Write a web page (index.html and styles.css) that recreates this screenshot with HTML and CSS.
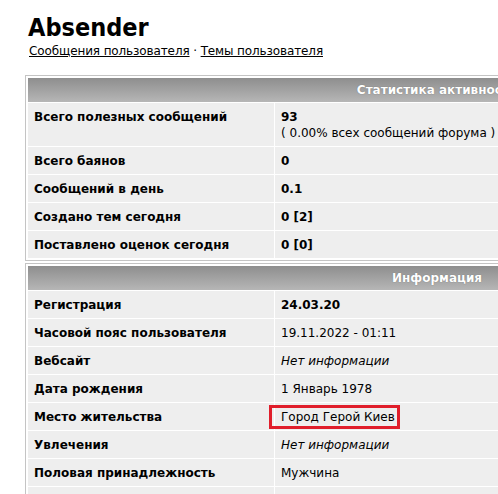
FILE: index.html
```html
<!DOCTYPE html>
<html lang="ru">
<head>
    <meta charset="UTF-8">
    <title>Absender</title>
    <link rel="stylesheet" href="styles.css">
</head>
<body>
    <div class="profile">
        <h1>Absender</h1>
        <div class="user-links">
            <a href="#posts">Сообщения пользователя</a> &middot; <a href="#topics">Темы пользователя</a>
        </div>

        <table class="box">
            <tr>
                <th colspan="2">Статистика активности</th>
            </tr>
            <tr>
                <td class="label">Всего полезных сообщений</td>
                <td class="value"><b>93</b><br>( 0.00% всех сообщений форума )</td>
            </tr>
            <tr>
                <td class="label">Всего баянов</td>
                <td class="value"><b>0</b></td>
            </tr>
            <tr>
                <td class="label">Сообщений в день</td>
                <td class="value"><b>0.1</b></td>
            </tr>
            <tr>
                <td class="label">Создано тем сегодня</td>
                <td class="value"><b>0 [2]</b></td>
            </tr>
            <tr>
                <td class="label">Поставлено оценок сегодня</td>
                <td class="value"><b>0 [0]</b></td>
            </tr>
        </table>

        <table class="box">
            <tr>
                <th colspan="2">Информация</th>
            </tr>
            <tr>
                <td class="label">Регистрация</td>
                <td class="value"><b>24.03.20</b></td>
            </tr>
            <tr>
                <td class="label">Часовой пояс пользователя</td>
                <td class="value">19.11.2022 - 01:11</td>
            </tr>
            <tr>
                <td class="label">Вебсайт</td>
                <td class="value"><i>Нет информации</i></td>
            </tr>
            <tr>
                <td class="label">Дата рождения</td>
                <td class="value">1 Январь 1978</td>
            </tr>
            <tr>
                <td class="label">Место жительства</td>
                <td class="value"><span class="marked">Город Герой Киев</span></td>
            </tr>
            <tr>
                <td class="label">Увлечения</td>
                <td class="value"><i>Нет информации</i></td>
            </tr>
            <tr>
                <td class="label">Половая принадлежность</td>
                <td class="value">Мужчина</td>
            </tr>
            <tr>
                <td class="label">&nbsp;</td>
                <td class="value">&nbsp;</td>
            </tr>
        </table>
    </div>
</body>
</html>
```

FILE: styles.css
```css
html, body {
    overflow: hidden;
}
body {
    font-family: "DejaVu Sans", Verdana, sans-serif;
    font-size: 12px;
    margin: 0;
    padding: 0;
    background-color: #fff;
    color: #000;
}
.profile {
    padding: 12px 0 0 25px;
    width: 830px;
}
h1 {
    font-family: "DejaVu Sans Condensed", "DejaVu Sans", Verdana, sans-serif;
    font-stretch: condensed;
    font-size: 25px;
    font-weight: bold;
    margin: 0 0 0 3px;
    line-height: 32px;
}
.user-links {
    margin: 0 0 0 4px;
    line-height: 15px;
    letter-spacing: -0.12px;
}
.user-links a {
    color: #000;
}
.box {
    width: 824px;
    border: 1px solid #c4c4c4;
    border-spacing: 1px;
    padding: 1px;
    margin-top: 2px;
    background-color: #fff;
}
.user-links + .box {
    margin-top: 16px;
}
.box th {
    height: 24px;
    padding: 0;
    background: linear-gradient(to bottom, #8e8e8e, #b6b6b6);
    color: #fff;
    font-weight: bold;
    font-size: 12px;
    text-align: center;
    text-shadow: 0 0 1px #666;
}
.box td {
    background-color: #eeeeee;
    padding: 6px 6px 5px 6px;
    line-height: 16px;
    vertical-align: top;
}
.box td.label {
    width: 234px;
    font-weight: bold;
}
.marked {
    position: relative;
}
.marked::after {
    content: "";
    position: absolute;
    left: -12px;
    right: -5px;
    top: -5px;
    bottom: -5px;
    border: 3px solid #e01e2b;
}
```
